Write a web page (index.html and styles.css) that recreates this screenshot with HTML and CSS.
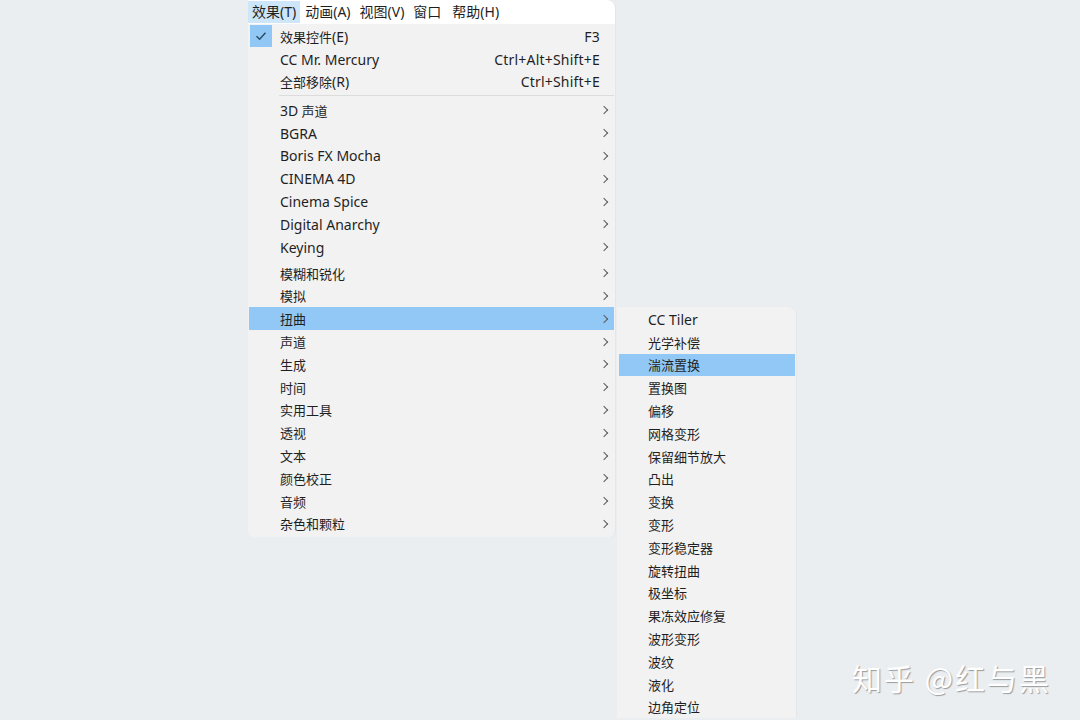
FILE: index.html
```html
<!DOCTYPE html>
<html lang="zh-CN">
<head>
    <meta charset="UTF-8">
    <title>效果菜单</title>
    <link rel="stylesheet" href="styles.css">
</head>
<body>

    <div class="stage">
        <div class="menu-column">
            <!-- top menu bar -->
            <div class="menubar">
                <span class="menubar-item active">效果(T)</span>
                <span class="menubar-item">动画(A)</span>
                <span class="menubar-item">视图(V)</span>
                <span class="menubar-item">窗口</span>
                <span class="menubar-item">帮助(H)</span>
            </div>

            <!-- effects menu -->
            <div class="menu">
                <div class="row checked">
                    <span class="check">
                        <svg width="14" height="14" viewBox="0 0 14 14"><path d="M2.5 7.2 L5.6 10.2 L11.5 3.8" fill="none" stroke="#2b4a63" stroke-width="1.4"/></svg>
                    </span>
                    <span class="label">效果控件<span class="en">(E)</span></span>
                    <span class="key">F3</span>
                </div>
                <div class="row">
                    <span class="label en">CC Mr. Mercury</span>
                    <span class="key">Ctrl+Alt+Shift+E</span>
                </div>
                <div class="row">
                    <span class="label">全部移除<span class="en">(R)</span></span>
                    <span class="key">Ctrl+Shift+E</span>
                </div>

                <div class="separator"></div>

                <div class="row sub"><span class="label"><span class="en">3D</span> 声道</span><span class="arrow"></span></div>
                <div class="row sub"><span class="label en">BGRA</span><span class="arrow"></span></div>
                <div class="row sub"><span class="label en">Boris FX Mocha</span><span class="arrow"></span></div>
                <div class="row sub"><span class="label en">CINEMA 4D</span><span class="arrow"></span></div>
                <div class="row sub"><span class="label en">Cinema Spice</span><span class="arrow"></span></div>
                <div class="row sub"><span class="label en">Digital Anarchy</span><span class="arrow"></span></div>
                <div class="row sub"><span class="label en">Keying</span><span class="arrow"></span></div>

                <div class="spacer"></div>

                <div class="row sub"><span class="label">模糊和锐化</span><span class="arrow"></span></div>
                <div class="row sub"><span class="label">模拟</span><span class="arrow"></span></div>
                <div class="row sub selected"><span class="label">扭曲</span><span class="arrow"></span></div>
                <div class="row sub"><span class="label">声道</span><span class="arrow"></span></div>
                <div class="row sub"><span class="label">生成</span><span class="arrow"></span></div>
                <div class="row sub"><span class="label">时间</span><span class="arrow"></span></div>
                <div class="row sub"><span class="label">实用工具</span><span class="arrow"></span></div>
                <div class="row sub"><span class="label">透视</span><span class="arrow"></span></div>
                <div class="row sub"><span class="label">文本</span><span class="arrow"></span></div>
                <div class="row sub"><span class="label">颜色校正</span><span class="arrow"></span></div>
                <div class="row sub"><span class="label">音频</span><span class="arrow"></span></div>
                <div class="row sub"><span class="label">杂色和颗粒</span><span class="arrow"></span></div>
            </div>
        </div>

        <!-- distort submenu -->
        <div class="submenu">
            <div class="row"><span class="label en">CC Tiler</span></div>
            <div class="row"><span class="label">光学补偿</span></div>
            <div class="row selected"><span class="label">湍流置换</span></div>
            <div class="row"><span class="label">置换图</span></div>
            <div class="row"><span class="label">偏移</span></div>
            <div class="row"><span class="label">网格变形</span></div>
            <div class="row"><span class="label">保留细节放大</span></div>
            <div class="row"><span class="label">凸出</span></div>
            <div class="row"><span class="label">变换</span></div>
            <div class="row"><span class="label">变形</span></div>
            <div class="row"><span class="label">变形稳定器</span></div>
            <div class="row"><span class="label">旋转扭曲</span></div>
            <div class="row"><span class="label">极坐标</span></div>
            <div class="row"><span class="label">果冻效应修复</span></div>
            <div class="row"><span class="label">波形变形</span></div>
            <div class="row"><span class="label">波纹</span></div>
            <div class="row"><span class="label">液化</span></div>
            <div class="row"><span class="label">边角定位</span></div>
        </div>
    </div>

    <div class="watermark">知乎 @红与黑</div>

</body>
</html>
```

FILE: styles.css
```css
html, body {
    height: 100%;
}

body {
    margin: 0;
    background: #ebeef1;
    color: #1f1f1f;
    font-family: "Noto Sans", "Noto Sans CJK SC", sans-serif;
    font-size: 14px;
    overflow: hidden;
}

.stage {
    display: flex;
    align-items: flex-start;
    gap: 2px;
    padding-left: 248px;
}

.menu-column {
    width: 367px;
}

/* menu bar */

.menubar {
    height: 24px;
    background: #fff;
    border-top-right-radius: 8px;
    display: flex;
    align-items: center;
    gap: 1px;
    box-shadow: 1px 0 0 #e2e4e6;
}

.menubar-item {
    padding: 1px 4px 2px;
    line-height: 19px;
    color: #1f1f1f;
}

.menubar-item:nth-child(4) {
    margin-right: 2px;
}

.menubar-item.active {
    background: #cde6f9;
}

/* main menu */

.menu {
    background: #f2f2f2;
    padding: 1px 0 2px;
    border-bottom-left-radius: 6px;
    border-bottom-right-radius: 6px;
    box-shadow: 1px 0 0 #e4e6e8;
}

.row {
    height: 22.8px;
    display: flex;
    align-items: center;
    position: relative;
}

.label {
    font-size: 13px;
}

.label.en,
.label .en {
    font-size: 14px;
}

.menu .row {
    padding: 0 5px 0 31px;
    margin: 0 1px;
}

.menu .row .label {
    flex: 1;
}

.key {
    padding-right: 9px;
    color: #1f1f1f;
    letter-spacing: 0.2px;
}

.check {
    position: absolute;
    left: 1px;
    top: 0;
    width: 22px;
    height: 22px;
    background: #91c7f4;
    display: flex;
    align-items: center;
    justify-content: center;
}

.arrow {
    width: 5px;
    height: 5px;
    border-right: 1.3px solid #5a5a5a;
    border-bottom: 1.3px solid #5a5a5a;
    transform: rotate(-45deg);
    margin-right: 2px;
}

.row.selected {
    background: #92c8f5;
}

.separator {
    height: 1px;
    margin: 2px 1px 2.6px 31px;
    background: #dcdcdc;
}

.spacer {
    height: 3.2px;
}

/* submenu */

.submenu {
    margin-top: 307px;
    width: 179px;
    background: #f2f2f2;
    border-top-right-radius: 8px;
    padding-top: 1px;
    box-shadow: 1px 0 0 #e4e6e8;
}

.submenu .row {
    padding-left: 29px;
    margin: 0 1px 0 2px;
}

/* watermark */

.watermark {
    position: absolute;
    left: 852px;
    top: 655px;
    font-family: "Noto Sans CJK SC", sans-serif;
    font-size: 30px;
    letter-spacing: 2px;
    color: #fff;
    text-shadow: 1px 1px 1px rgba(0, 0, 0, 0.35);
}
```
